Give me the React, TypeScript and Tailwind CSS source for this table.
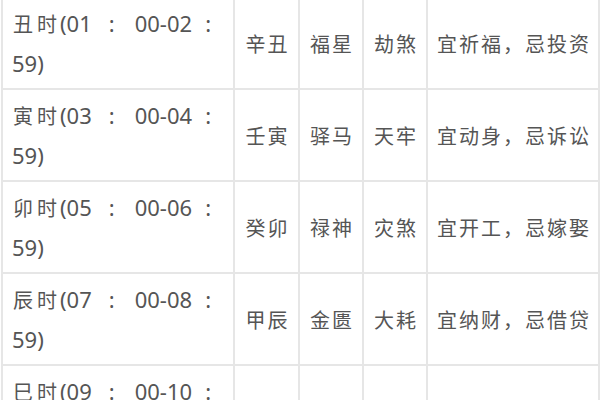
import React from "react";

const rows = [
  { h: "丑", s: "01", e: "02", a: "辛丑", b: "福星", c: "劫煞", d: "宜祈福，忌投资" },
  { h: "寅", s: "03", e: "04", a: "壬寅", b: "驿马", c: "天牢", d: "宜动身，忌诉讼" },
  { h: "卯", s: "05", e: "06", a: "癸卯", b: "禄神", c: "灾煞", d: "宜开工，忌嫁娶" },
  { h: "辰", s: "07", e: "08", a: "甲辰", b: "金匮", c: "大耗", d: "宜纳财，忌借贷" },
  { h: "巳", s: "09", e: "10", a: "乙巳", b: "天德", c: "小耗", d: "宜祭祀，忌出行" },
];

const cell = "border-2 border-[#e6e6e6] text-center align-middle whitespace-nowrap";

function Cjk({ children }: { children: React.ReactNode }) {
  return <span className="text-[20px] tracking-[2px] mr-[-2px]">{children}</span>;
}

export default function App() {
  return (
    <div
      className="w-[600px] h-[400px] overflow-hidden bg-white text-[#555] pl-[1px]"
      style={{ fontFamily: '"Noto Sans", "Noto Sans CJK SC", sans-serif' }}
    >
      <table className="-mt-[4px] border-collapse table-fixed w-[597px] text-[22px]">
        <colgroup>
          <col className="w-[232px]" />
          <col className="w-[65px]" />
          <col className="w-[64px]" />
          <col className="w-[64px]" />
          <col className="w-[172px]" />
        </colgroup>
        <tbody>
          {rows.map((r, i) => (
            <tr key={i} className="h-[92px]">
              <td className="border-2 border-[#e6e6e6] pl-[9px] pr-[2px] align-middle leading-[38px] whitespace-nowrap">
                <span className="text-[20px] ml-[1px]">{r.h}</span>
                <span className="text-[20px] ml-[4px]">时</span>
                <span className="ml-[3px]">({r.s}</span>
                <span className="ml-[17px]">:</span>
                <span className="ml-[20px]">00-{r.e}</span>
                <span className="ml-[13px]">:</span>
                <br />
                <span>59)</span>
              </td>
              <td className={cell}><Cjk>{r.a}</Cjk></td>
              <td className={cell}><Cjk>{r.b}</Cjk></td>
              <td className={cell}><Cjk>{r.c}</Cjk></td>
              <td className={cell}><Cjk>{r.d}</Cjk></td>
            </tr>
          ))}
        </tbody>
      </table>
    </div>
  );
}
